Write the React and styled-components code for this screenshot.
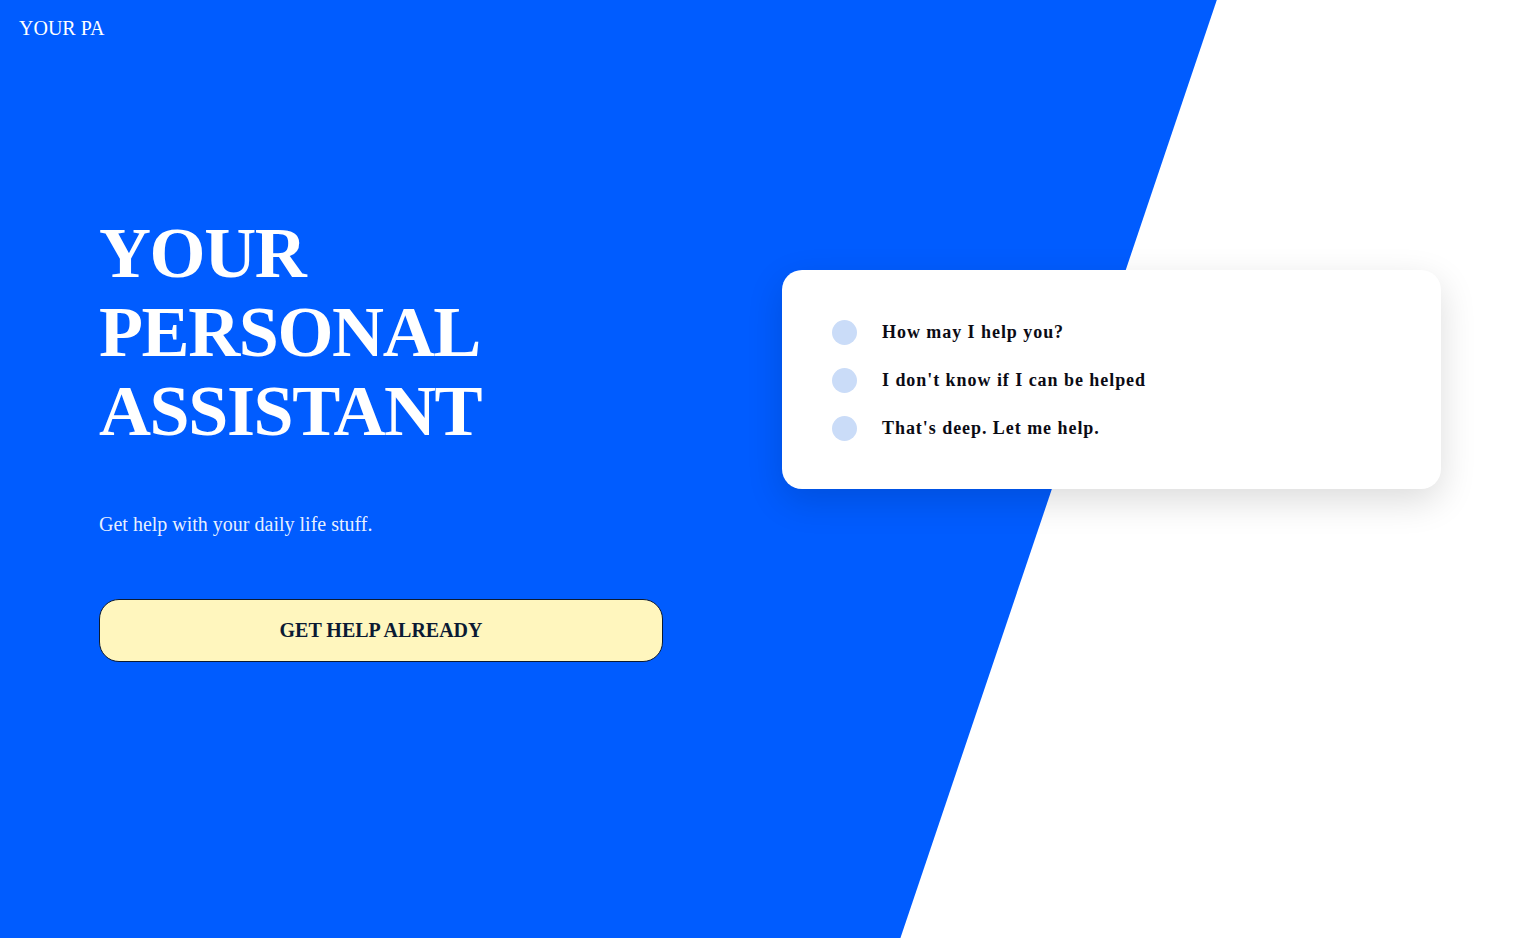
import React from 'react'
import styled, { createGlobalStyle } from 'styled-components'

const GlobalStyle = createGlobalStyle`
  * {
    box-sizing: border-box;
  }

  body {
    margin: 0;
    font-family: "Liberation Serif", "Times New Roman", serif;
    background: #fff;
  }
`

const Page = styled.div`
  position: relative;
  min-height: 100vh;
  overflow: hidden;

  &::before {
    content: '';
    position: absolute;
    inset: 0;
    background: #005cff;
    clip-path: polygon(0 0, 80% 0, 59.2% 100%, 0 100%);
    z-index: 0;
  }
`

const Header = styled.header`
  position: relative;
  z-index: 1;
  padding: 16px 19px;
`

const Logo = styled.div`
  color: #fff;
  font-size: 20px;
  line-height: 24px;
`

const Main = styled.main`
  position: relative;
  z-index: 1;
  display: grid;
  grid-template-columns: 1fr 659px;
  align-items: start;
  padding: 0 80px 0 99px;
`

const Hero = styled.section`
  padding-top: 158px;
  width: 564px;
`

const Title = styled.h1`
  margin: 0;
  color: #fff;
  font-size: 72px;
  line-height: 79.2px;
  font-weight: 700;
  letter-spacing: -1.4px;
`

const Subtitle = styled.p`
  margin: 60px 0 0;
  color: rgba(255, 255, 255, 0.92);
  font-size: 20px;
  line-height: 24px;
`

const CtaButton = styled.button`
  display: block;
  width: 100%;
  height: 63px;
  margin-top: 63px;
  background: #fff6be;
  border: 1px solid #0b1a33;
  border-radius: 20px;
  color: #0b1a33;
  font-family: inherit;
  font-size: 20px;
  font-weight: 700;
  cursor: pointer;
`

const Card = styled.div`
  margin-top: 214px;
  height: 219px;
  padding: 50px;
  background: #fff;
  border-radius: 20px;
  box-shadow: 0 12px 36px rgba(0, 0, 0, 0.14);
  display: flex;
  flex-direction: column;
  gap: 23px;
`

const Item = styled.div`
  display: flex;
  align-items: center;
  gap: 25px;
  height: 25px;
`

const Dot = styled.span`
  flex: none;
  width: 25px;
  height: 25px;
  border-radius: 50%;
  background: #cadcf8;
`

const ItemText = styled.span`
  color: #0b0b14;
  font-size: 18px;
  font-weight: 700;
  letter-spacing: 0.95px;
`

const messages = [
  'How may I help you?',
  "I don't know if I can be helped",
  "That's deep. Let me help."
]

const App = () => (
  <>
    <GlobalStyle />
    <Page>
      <Header>
        <Logo>YOUR PA</Logo>
      </Header>
      <Main>
        <Hero>
          <Title>
            YOUR
            <br />
            PERSONAL
            <br />
            ASSISTANT
          </Title>
          <Subtitle>Get help with your daily life stuff.</Subtitle>
          <CtaButton>GET HELP ALREADY</CtaButton>
        </Hero>
        <Card>
          {messages.map(text => (
            <Item key={text}>
              <Dot />
              <ItemText>{text}</ItemText>
            </Item>
          ))}
        </Card>
      </Main>
    </Page>
  </>
)

export default App
